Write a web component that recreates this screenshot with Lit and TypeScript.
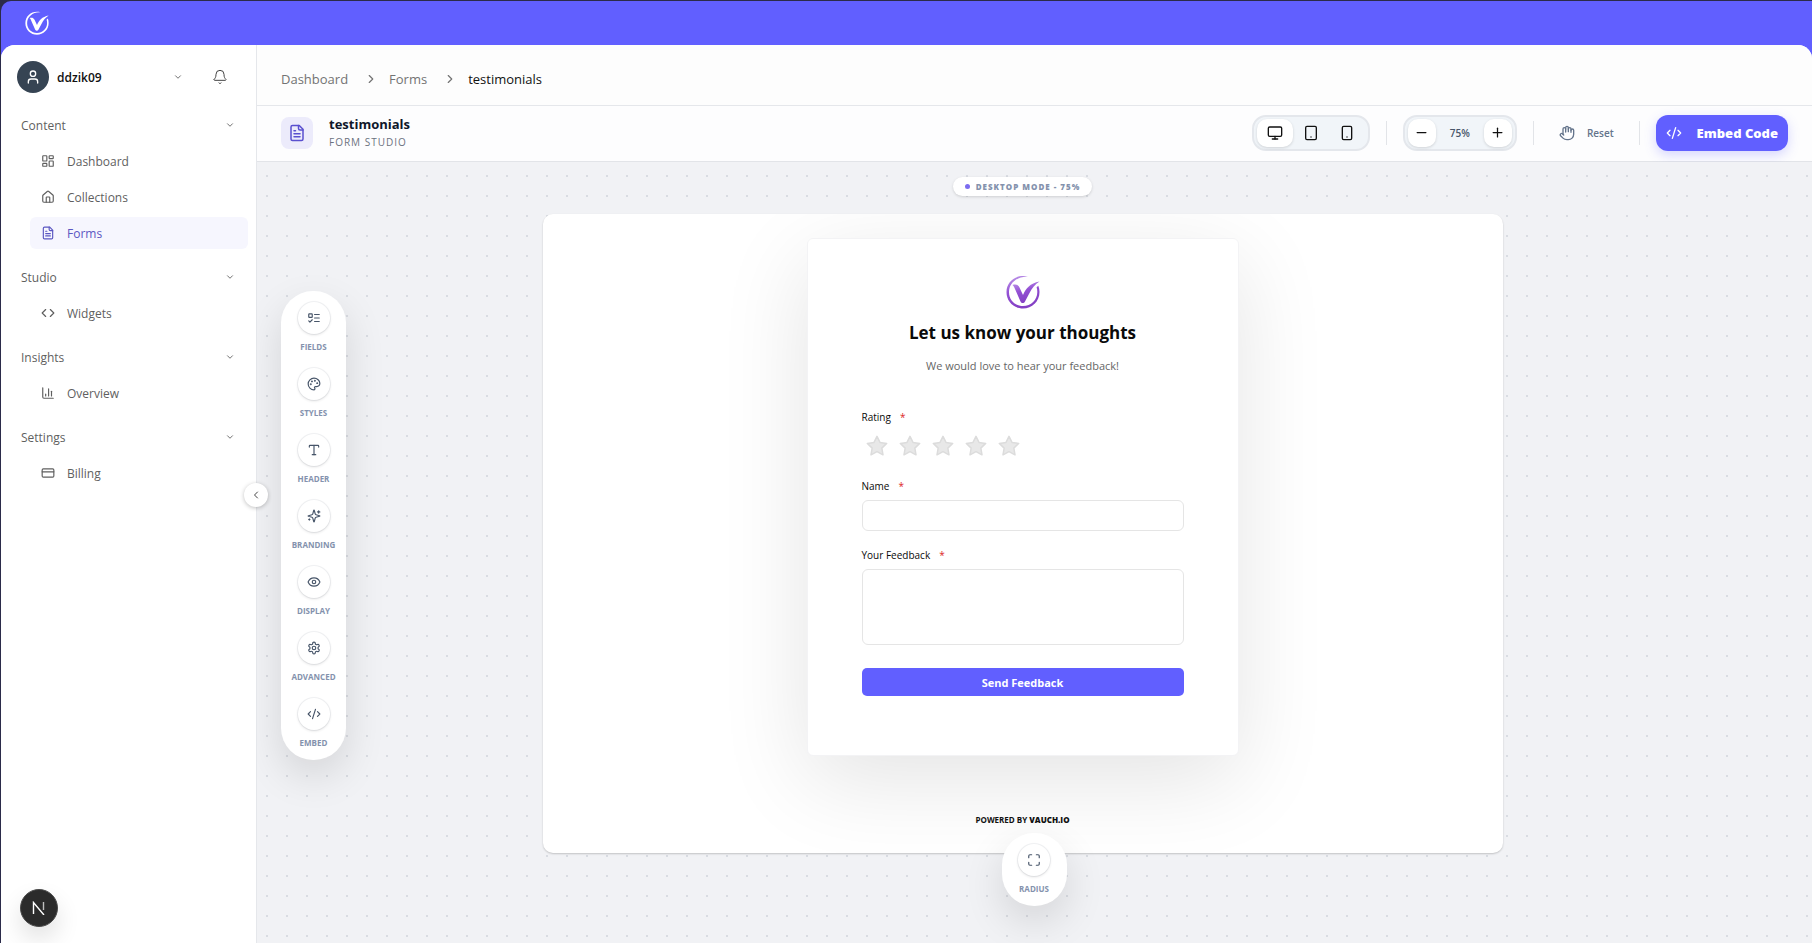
import { LitElement, html, css, svg, nothing } from "lit";
import { customElement, property, state } from "lit/decorators.js";
import { classMap } from "lit/directives/class-map.js";

const icons: Record<string, unknown> = {
  user: svg`<circle cx="12" cy="7" r="4"/><path d="M19 21v-2a4 4 0 0 0-4-4H9a4 4 0 0 0-4 4v2"/>`,
  down: svg`<path d="m6 9 6 6 6-6"/>`,
  right: svg`<path d="m9 18 6-6-6-6"/>`,
  left: svg`<path d="m15 18-6-6 6-6"/>`,
  bell: svg`<path d="M10.3 21a2 2 0 0 0 3.4 0"/><path d="M3.3 15.3A1 1 0 0 0 4 17h16a1 1 0 0 0 .7-1.7C19.4 14 18 12.5 18 8A6 6 0 0 0 6 8c0 4.5-1.4 6-2.7 7.3"/>`,
  dashboard: svg`<rect width="7" height="9" x="3" y="3" rx="1"/><rect width="7" height="5" x="14" y="3" rx="1"/><rect width="7" height="9" x="14" y="12" rx="1"/><rect width="7" height="5" x="3" y="16" rx="1"/>`,
  home: svg`<path d="M15 21v-8a1 1 0 0 0-1-1h-4a1 1 0 0 0-1 1v8"/><path d="M3 10a2 2 0 0 1 .7-1.5l7-6a2 2 0 0 1 2.6 0l7 6A2 2 0 0 1 21 10v9a2 2 0 0 1-2 2H5a2 2 0 0 1-2-2z"/>`,
  file: svg`<path d="M15 2H6a2 2 0 0 0-2 2v16a2 2 0 0 0 2 2h12a2 2 0 0 0 2-2V7Z"/><path d="M14 2v4a2 2 0 0 0 2 2h4"/><path d="M10 9H8"/><path d="M16 13H8"/><path d="M16 17H8"/>`,
  code: svg`<path d="m16 18 6-6-6-6"/><path d="m8 6-6 6 6 6"/>`,
  chart: svg`<path d="M3 3v16a2 2 0 0 0 2 2h16"/><path d="M18 17V9"/><path d="M13 17V5"/><path d="M8 17v-3"/>`,
  card: svg`<rect width="20" height="14" x="2" y="5" rx="2"/><path d="M2 10h20"/>`,
  fields: svg`<rect x="3" y="5" width="6" height="6" rx="1"/><path d="m3 17 2 2 4-4"/><path d="M13 6h8"/><path d="M13 12h8"/><path d="M13 18h8"/>`,
  palette: svg`<circle cx="13.5" cy="6.5" r=".7"/><circle cx="17.5" cy="10.5" r=".7"/><circle cx="8.5" cy="7.5" r=".7"/><circle cx="6.5" cy="12.5" r=".7"/><path d="M12 2C6.5 2 2 6.5 2 12s4.5 10 10 10c.926 0 1.648-.746 1.648-1.688 0-.437-.18-.835-.437-1.125-.29-.289-.438-.652-.438-1.125a1.64 1.64 0 0 1 1.668-1.668h1.996c3.051 0 5.555-2.503 5.555-5.554C21.965 6.012 17.461 2 12 2z"/>`,
  type: svg`<path d="M12 4v16"/><path d="M4 7V5a1 1 0 0 1 1-1h14a1 1 0 0 1 1 1v2"/><path d="M9 20h6"/>`,
  sparkles: svg`<path d="M9.937 15.5A2 2 0 0 0 8.5 14.063l-6.135-1.582a.5.5 0 0 1 0-.962L8.5 9.936A2 2 0 0 0 9.937 8.5l1.582-6.135a.5.5 0 0 1 .963 0L14.063 8.5A2 2 0 0 0 15.5 9.937l6.135 1.581a.5.5 0 0 1 0 .964L15.5 14.063a2 2 0 0 0-1.437 1.437l-1.582 6.135a.5.5 0 0 1-.963 0z"/><path d="M20 3v4"/><path d="M22 5h-4"/><path d="M4 17v2"/><path d="M5 18H3"/>`,
  eye: svg`<path d="M2.062 12.348a1 1 0 0 1 0-.696 10.75 10.75 0 0 1 19.876 0 1 1 0 0 1 0 .696 10.75 10.75 0 0 1-19.876 0"/><circle cx="12" cy="12" r="3"/>`,
  settings: svg`<path d="M12.22 2h-.44a2 2 0 0 0-2 2v.18a2 2 0 0 1-1 1.73l-.43.25a2 2 0 0 1-2 0l-.15-.08a2 2 0 0 0-2.73.73l-.22.38a2 2 0 0 0 .73 2.73l.15.1a2 2 0 0 1 1 1.72v.51a2 2 0 0 1-1 1.74l-.15.09a2 2 0 0 0-.73 2.73l.22.38a2 2 0 0 0 2.73.73l.15-.08a2 2 0 0 1 2 0l.43.25a2 2 0 0 1 1 1.73V20a2 2 0 0 0 2 2h.44a2 2 0 0 0 2-2v-.18a2 2 0 0 1 1-1.73l.43-.25a2 2 0 0 1 2 0l.15.08a2 2 0 0 0 2.73-.73l.22-.39a2 2 0 0 0-.73-2.73l-.15-.08a2 2 0 0 1-1-1.74v-.5a2 2 0 0 1 1-1.74l.15-.09a2 2 0 0 0 .73-2.73l-.22-.38a2 2 0 0 0-2.73-.73l-.15.08a2 2 0 0 1-2 0l-.43-.25a2 2 0 0 1-1-1.73V4a2 2 0 0 0-2-2z"/><circle cx="12" cy="12" r="3"/>`,
  embed: svg`<path d="m18 16 4-4-4-4"/><path d="m6 8-4 4 4 4"/><path d="m14.5 4-5 16"/>`,
  desktop: svg`<rect width="20" height="14" x="2" y="3" rx="2"/><path d="M8 21h8"/><path d="M12 17v4"/>`,
  tablet: svg`<rect width="16" height="20" x="4" y="2" rx="2"/><path d="M12 18h.01"/>`,
  phone: svg`<rect width="14" height="20" x="5" y="2" rx="2"/><path d="M12 18h.01"/>`,
  minus: svg`<path d="M5 12h14"/>`,
  plus: svg`<path d="M5 12h14"/><path d="M12 5v14"/>`,
  hand: svg`<path d="M18 11V6a2 2 0 0 0-4 0"/><path d="M14 10V4a2 2 0 0 0-4 0v2"/><path d="M10 10.5V6a2 2 0 0 0-4 0v8"/><path d="M18 8a2 2 0 1 1 4 0v6a8 8 0 0 1-8 8h-2c-2.8 0-4.5-.86-5.99-2.34l-3.6-3.6a2 2 0 0 1 2.83-2.82L7 15"/>`,
  corners: svg`<path d="M8 3H5a2 2 0 0 0-2 2v3"/><path d="M21 8V5a2 2 0 0 0-2-2h-3"/><path d="M3 16v3a2 2 0 0 0 2 2h3"/><path d="M16 21h3a2 2 0 0 0 2-2v-3"/>`,
  star: svg`<path d="M12 2.3l3 6.1 6.7 1-4.85 4.7 1.15 6.7L12 17.65 6 20.8l1.15-6.7L2.3 9.4l6.7-1z"/>`,
};

const icon = (name: string, size: number, stroke = 2) => html`<svg
  class="icon" width=${size} height=${size} viewBox="0 0 24 24" fill="none" stroke="currentColor"
  stroke-width=${stroke} stroke-linecap="round" stroke-linejoin="round" aria-hidden="true">${icons[name]}</svg>`;

const brandMark = (size: number, paint: string) => html`<svg
  class="icon" width=${size} height=${size} viewBox="0 0 34 34" aria-hidden="true">
  <defs>
    <linearGradient id="violet" x1="0" y1="0" x2="0.3" y2="1">
      <stop offset="0" stop-color="#c09aea"/><stop offset="0.5" stop-color="#9350d4"/><stop offset="1" stop-color="#8440c4"/>
    </linearGradient>
  </defs>
  <g fill=${paint}>
    <path d="M22 1.800C11 -1.200 0.500 6 0.500 17.200 0.500 26.500 8 33.500 17 33.500S33.500 26.500 33.500 17c0-2.300-.4-4.300-1.200-6.200l-1.700 1.500c.5 1.500.7 3 .7 4.700 0 8-6.300 14-14.300 14S3 25 3 17.200C3 8 11.500 1 22 1.800z"/>
    <path d="M6.500 10C9.500 9 12 9.500 13.500 12.500L17 20C20 13 24 8.500 33.500 6.500 29 9.500 26 13 23.500 18L19 26.500C18 28.500 15.500 28.500 14.500 26.500L9 14C8.300 12 7.700 11 6.500 10z"/>
  </g>
</svg>`;

const base = css`
  * { box-sizing: border-box; }
  .icon { display: block; flex: none; }
  button { font: inherit; color: inherit; border: 0; padding: 0; background: none; cursor: pointer; }
  a { color: inherit; text-decoration: none; }
`;

interface NavGroup { title: string; items: { icon: string; label: string; active?: boolean }[]; }

const groups: NavGroup[] = [
  { title: "Content", items: [
    { icon: "dashboard", label: "Dashboard" },
    { icon: "home", label: "Collections" },
    { icon: "file", label: "Forms", active: true },
  ] },
  { title: "Studio", items: [{ icon: "code", label: "Widgets" }] },
  { title: "Insights", items: [{ icon: "chart", label: "Overview" }] },
  { title: "Settings", items: [{ icon: "card", label: "Billing" }] },
];

@customElement("side-nav")
class SideNav extends LitElement {
  static styles = [base, css`
    :host { display: flex; flex-direction: column; position: relative; z-index: 2; width: 256px; flex: none; border-radius: 14px 0 0 0; background: #fff; border-right: 1px solid #e5e7eb; color: #5f5f5f; }
    .account { display: flex; align-items: center; padding: 16px 28px 16px 16px; }
    .who { display: flex; align-items: center; gap: 8px; flex: 1; color: #111; font-size: 12px; font-weight: 600; }
    .who .name { flex: 1; text-align: left; }
    .avatar { display: grid; place-items: center; width: 32px; height: 32px; border-radius: 50%; background: #364453; color: #fff; }
    .chevron { color: #555; }
    .bell { margin-left: 29px; color: #444; }
    nav { display: flex; flex-direction: column; gap: 12px; padding: 0 8px 0 20px; }
    .heading { display: flex; width: 100%; align-items: center; justify-content: space-between; height: 32px; padding-right: 13px; font-size: 12px; font-weight: 500; }
    ul { list-style: none; display: flex; flex-direction: column; gap: 4px; margin: 4px 0 0; padding: 0 0 0 9px; }
    .link { display: flex; align-items: center; gap: 12px; height: 32px; padding-left: 11px; border-radius: 6px; font-size: 12px; font-weight: 500; }
    .link.active { background: #f6f6fe; color: #5b57c2; }
    .collapse { position: absolute; right: -12px; top: 438px; display: grid; place-items: center; width: 24px; height: 24px; border-radius: 50%; background: #fff; color: #444; box-shadow: 0 1px 4px rgb(0 0 0 / 0.25); }
    .dev { position: absolute; left: 19px; bottom: 17px; display: grid; place-items: center; width: 38px; height: 38px; border-radius: 50%; background: #2b2b2b; border: 1px solid #4a4a4a; box-shadow: 0 12px 24px rgb(0 0 0 / 0.12); }
  `];

  render() {
    return html`
      <div class="account">
        <button class="who" type="button">
          <span class="avatar">${icon("user", 16)}</span>
          <span class="name">ddzik09</span>
          <span class="chevron">${icon("down", 10)}</span>
        </button>
        <button class="bell" type="button" aria-label="Notifications">${icon("bell", 16, 1.5)}</button>
      </div>
      <nav>
        ${groups.map((g) => html`<section>
          <button class="heading" type="button">${g.title}<span class="chevron">${icon("down", 10)}</span></button>
          <ul>${g.items.map((i) => html`<li>
            <a class=${classMap({ link: true, active: !!i.active })} href="#" aria-current=${i.active ? "page" : nothing}>${icon(i.icon, 14)}${i.label}</a>
          </li>`)}</ul>
        </section>`)}
      </nav>
      <button class="collapse" type="button" aria-label="Collapse sidebar">${icon("left", 12)}</button>
      <button class="dev" type="button" aria-label="Developer tools">
        <svg class="icon" width="14" height="14" viewBox="0 0 14 14" fill="none" stroke="#fff" stroke-width="1.4" aria-hidden="true"><path d="M1.5 13V1.5L12 14"/><path d="M11.5 1v8" stroke-opacity="0.7"/></svg>
      </button>`;
  }
}

@customElement("studio-toolbar")
class StudioToolbar extends LitElement {
  @property({ type: Number }) zoom = 75;
  @property() device = "desktop";

  static styles = [base, css`
    :host { display: flex; align-items: center; justify-content: space-between; height: 56px; padding: 0 24px 2px; border-bottom: 1px solid #e2e4e8; background: #fdfdfe; }
    .title { display: flex; align-items: center; gap: 16px; }
    .tile { display: grid; place-items: center; width: 32px; height: 32px; border-radius: 8px; background: #ecebfb; color: #5a50cf; }
    h1 { margin: 0; font-size: 13px; line-height: 18px; font-weight: 700; color: #0f172a; }
    p { margin: 0; font-size: 10px; line-height: 18px; font-weight: 500; letter-spacing: 1px; color: #6b7280; }
    .actions { display: flex; align-items: center; gap: 16px; }
    .group { display: flex; align-items: center; height: 36px; padding: 2px 3px; border: 2px solid #e4e7ec; border-radius: 14px; background: #f1f5f9; color: #111; }
    .group button { display: grid; place-items: center; width: 36px; height: 28px; border-radius: 10px; }
    .group .step { width: 28px; }
    .group button.raised { background: #fff; box-shadow: 0 1px 3px rgb(0 0 0 / 0.14); }
    .group output { width: 48px; text-align: center; font-size: 10px; font-weight: 600; color: #475569; }
    .rule { width: 1px; height: 24px; background: #e2e4e8; }
    .reset { display: flex; align-items: center; gap: 12px; padding: 0 9px; font-size: 10px; font-weight: 600; color: #64748b; }
    .embed { display: flex; align-items: center; gap: 15px; height: 36px; padding: 0 10px; border-radius: 12px; background: #615fff; color: #fff; font-size: 13px; font-weight: 800; box-shadow: 0 4px 12px rgb(97 95 255 / 0.25); }
  `];

  render() {
    return html`
      <div class="title">
        <span class="tile">${icon("file", 18)}</span>
        <div><h1>testimonials</h1><p>FORM STUDIO</p></div>
      </div>
      <div class="actions">
        <div class="group" role="group" aria-label="Preview device">
          ${["desktop", "tablet", "phone"].map((d) => html`<button type="button" aria-label=${d}
            class=${classMap({ raised: d === this.device })} aria-pressed=${d === this.device}>${icon(d, 16)}</button>`)}
        </div>
        <span class="rule"></span>
        <div class="group" role="group" aria-label="Zoom">
          <button class="step raised" type="button" aria-label="Zoom out">${icon("minus", 15)}</button>
          <output>${this.zoom}%</output>
          <button class="step raised" type="button" aria-label="Zoom in">${icon("plus", 15)}</button>
        </div>
        <span class="rule"></span>
        <button class="reset" type="button">${icon("hand", 16)}Reset</button>
        <span class="rule"></span>
        <button class="embed" type="button">${icon("embed", 16)}Embed Code</button>
      </div>`;
  }
}

const tools = [
  ["fields", "FIELDS"], ["palette", "STYLES"], ["type", "HEADER"], ["sparkles", "BRANDING"],
  ["eye", "DISPLAY"], ["settings", "ADVANCED"], ["embed", "EMBED"],
];

@customElement("tool-dock")
class ToolDock extends LitElement {
  @property({ attribute: false }) items: string[][] = [];

  static styles = [base, css`
    :host { display: flex; flex-direction: column; gap: 14px; width: 65px; padding: 11px 0 10px; border-radius: 32px; background: #fff; box-shadow: 0 16px 40px rgb(0 0 0 / 0.12); }
    .tool { display: flex; flex-direction: column; align-items: center; gap: 6px; height: 52px; font-size: 8px; line-height: 14px; font-weight: 700; color: #8492ad; }
    .disc { display: grid; place-items: center; width: 32px; height: 32px; border-radius: 50%; background: #fff; color: #475569; box-shadow: 0 1px 3px rgb(0 0 0 / 0.12), 0 0 0 1px #f3f4f6; }
  `];

  render() {
    return this.items.map(([glyph, label]) => html`<button class="tool" type="button">
      <span class="disc">${icon(glyph, 14)}</span>${label}</button>`);
  }
}

@customElement("feedback-form")
class FeedbackForm extends LitElement {
  @state() private rating = 0;

  static styles = [base, css`
    :host { display: block; width: 100%; max-width: 432px; border: 1px solid #f3f3f5; border-radius: 6px; background: #fff; box-shadow: 0 24px 90px rgb(0 0 0 / 0.11); }
    form { display: flex; flex-direction: column; padding: 36px 54px 59px; }
    .logo { align-self: center; }
    h2 { margin: 10px 0 0; font-size: 17px; line-height: 28px; font-weight: 700; text-align: center; color: #0a0a0a; }
    .lead { margin: 10px 0 35px; font-size: 11px; line-height: 18px; text-align: center; color: #666; }
    fieldset { margin: 0; padding: 0; border: 0; }
    .label { display: block; padding: 0; font-size: 10px; line-height: 14px; font-weight: 500; color: #0a0a0a; }
    .req { margin-left: 9px; color: #dc2626; }
    .stars { display: flex; gap: 9px; height: 24px; margin: 10px 0 21px 3px; }
    .star { position: relative; width: 24px; height: 24px; color: #dcdcdc; cursor: pointer; }
    .star svg { fill: #e8e8e8; }
    .star.on { color: #f5b301; }
    .star input { position: absolute; inset: 0; margin: 0; opacity: 0; }
    .field { display: block; width: 100%; margin: 7px 0 17px; border: 1px solid #e5e5e5; border-radius: 6px; padding: 4px 9px; background: #fff; font: inherit; font-size: 12px; resize: none; }
    input.field { height: 31px; }
    textarea.field { height: 76px; margin-bottom: 23px; }
    .send { height: 28px; border-radius: 5px; background: #615fff; color: #fff; font-size: 11px; font-weight: 700; }
  `];

  render() {
    return html`<form @submit=${(e: Event) => e.preventDefault()}>
      <span class="logo">${brandMark(34, "url(#violet)")}</span>
      <h2>Let us know your thoughts</h2>
      <p class="lead">We would love to hear your feedback!</p>
      <fieldset>
        <legend class="label">Rating<span class="req">*</span></legend>
        <div class="stars">${[1, 2, 3, 4, 5].map((n) => html`<label class=${classMap({ star: true, on: n <= this.rating })}>
          <input type="radio" name="rating" value=${n} aria-label="${n} stars" @change=${() => (this.rating = n)}>${icon("star", 24, 1.5)}
        </label>`)}</div>
      </fieldset>
      <label class="label" for="name">Name<span class="req">*</span></label>
      <input class="field" id="name" type="text">
      <label class="label" for="feedback">Your Feedback<span class="req">*</span></label>
      <textarea class="field" id="feedback"></textarea>
      <button class="send" type="submit">Send Feedback</button>
    </form>`;
  }
}

@customElement("app-root")
class AppRoot extends LitElement {
  static styles = [base, css`
    :host { display: flex; flex-direction: column; min-height: 100vh; padding: 1px 0 0 1px; background: #2b2b4a; font-family: "Open Sans", "Noto Sans", sans-serif; }
    .top { display: flex; align-items: center; height: 58px; margin-bottom: -14px; padding: 0 24px 14px; border-radius: 10px 0 0 0; background: #615fff; }
    .shell { display: flex; flex: 1; border-radius: 14px 14px 0 0; background: #fff; }
    .main { display: flex; flex-direction: column; flex: 1; min-width: 0; }
    .crumbs { display: flex; align-items: center; height: 61px; padding: 0 24px; border-bottom: 1px solid #e5e7eb; border-radius: 0 14px 0 0; background: #fdfdfd; font-size: 13px; color: #737373; }
    .crumbs ol { display: flex; align-items: center; gap: 11px; list-style: none; margin: 0; padding: 8px 0 0; }
    .crumbs li { display: flex; align-items: center; gap: 16px; }
    .crumbs .current { color: #111; }
    .canvas { position: relative; display: flex; flex-direction: column; align-items: center; gap: 18px; flex: 1; padding: 15px 24px 90px 0; background: #f1f2f5 radial-gradient(circle, #d9dce2 1px, transparent 1px) 0 4px / 20px 20px; }
    .mode { display: flex; align-items: center; gap: 6px; height: 19px; padding: 0 12px; border-radius: 10px; background: #fff; box-shadow: 0 1px 3px rgb(0 0 0 / 0.15); font-size: 8px; font-weight: 800; letter-spacing: 1px; color: #8492ad; }
    .dot { width: 5px; height: 5px; border-radius: 50%; background: #7c6cf0; }
    .stage { display: flex; flex-direction: column; align-items: center; justify-content: space-between; width: 100%; max-width: 960px; padding: 24px 24px 25px; border-radius: 10px; overflow: hidden; background: #fff; box-shadow: 0 1px 2px rgb(0 0 0 / 0.2); }
    .powered { margin: 56px 0 0; font-size: 8px; line-height: 16px; font-weight: 700; color: #111; }
    .powered b { font-weight: 800; }
    .rail { position: absolute; left: 24px; top: 129px; }
    .floating { position: absolute; left: calc(50% - 33px); bottom: 38px; }
  `];

  render() {
    return html`
      <header class="top">${brandMark(24, "#fff")}</header>
      <div class="shell">
        <side-nav></side-nav>
        <main class="main">
          <nav class="crumbs" aria-label="Breadcrumb"><ol>
            <li><a href="#">Dashboard</a>${icon("right", 14)}</li>
            <li><a href="#">Forms</a>${icon("right", 14)}</li>
            <li class="current" aria-current="page">testimonials</li>
          </ol></nav>
          <studio-toolbar></studio-toolbar>
          <section class="canvas">
            <div class="mode"><span class="dot"></span>DESKTOP MODE - 75%</div>
            <div class="stage">
              <feedback-form></feedback-form>
              <p class="powered">POWERED BY <b>VAUCH.IO</b></p>
            </div>
            <tool-dock class="rail" .items=${tools}></tool-dock>
            <tool-dock class="floating" .items=${[["corners", "RADIUS"]]}></tool-dock>
          </section>
        </main>
      </div>`;
  }
}
